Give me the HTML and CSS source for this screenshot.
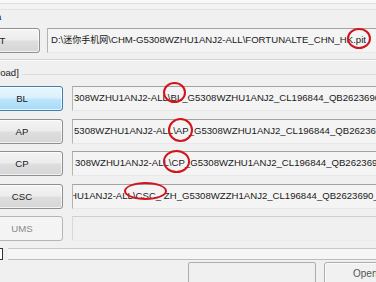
FILE: index.html
```html
<!DOCTYPE html>
<html>
<head>
<meta charset="utf-8">
<link rel="stylesheet" href="styles.css">
</head>
<body>
<div class="win">
  <div class="topstrip"><div class="band"></div><div class="band2"></div><span class="cut">a</span></div>
  <div class="row pitrow">
    <button class="btn pit">PIT</button>
    <div class="tb">D:\<span class="cjk">迷你手机网</span>\CHM-G5308WZHU1ANJ2-ALL\FORTUNALTE_CHN_HK.pit</div>
  </div>
  <div class="sep"></div>
  <div class="grp"><span class="grplabel">load]</span><span class="grpline"></span></div>
  <div class="rows">
    <div class="row"><button class="btn act">BL</button><div class="tb">308WZHU1ANJ2-ALL\BL_G5308WZHU1ANJ2_CL196844_QB2623690</div></div>
    <div class="row"><button class="btn">AP</button><div class="tb">5308WZHU1ANJ2-ALL\AP_G5308WZHU1ANJ2_CL196844_QB2623690</div></div>
    <div class="row"><button class="btn">CP</button><div class="tb tb-cp">308WZHU1ANJ2-ALL\CP_G5308WZHU1ANJ2_CL196844_QB2623690</div></div>
    <div class="row"><button class="btn">CSC</button><div class="tb tb-csc">HU1ANJ2-ALL\CSC_ ZH_G5308WZZH1ANJ2_CL196844_QB2623690_</div></div>
    <div class="row"><button class="btn dis">UMS</button><div class="tb tbdis"></div></div>
  </div>
  <div class="prog"><span class="chk"></span><span class="bar"></span></div>
  <div class="bottom"><div class="box"></div><button class="btn open">Open</button></div>
  <div class="ring r0"></div>
  <div class="ring r1"></div>
  <div class="ring r2"></div>
  <div class="ring r3"></div>
  <div class="ring r4"></div>
</div>
</body>
</html>
```
FILE: styles.css
```css
html, body { margin: 0; padding: 0; }
body { background: #f0f0f0; overflow: hidden; }
.win {
  position: relative;
  width: 376px;
  height: 282px;
  overflow: hidden;
  font-family: "Liberation Sans", "Noto Sans CJK SC", sans-serif;
  font-size: 9.6px;
  color: #1a1a1a;
  background: #f0f0f0;
}
.topstrip { height: 20px; position: relative; }
.band { height: 3px; background: #f9f9f9; border-bottom: 1px solid #dedede; }
.band2 { height: 5px; border-bottom: 1px solid #e2e2e2; background: #f3f3f3; }
.cut { display: block; margin-left: -4px; line-height: 9px; margin-top: 2px; }
.row { display: flex; align-items: stretch; height: 25px; gap: 9px; }
.pitrow { margin-top: 8px; gap: 7px; }
.btn {
  flex: none;
  width: 82px;
  margin-left: -19px;
  height: 25px;
  box-sizing: border-box;
  border: 1px solid #8e8f8f;
  border-radius: 3px;
  background: linear-gradient(#f4f4f4 0%, #ececec 48%, #dedede 52%, #d6d6d6 100%);
  font-family: inherit;
  font-size: 9.6px;
  color: #1a1a1a;
  padding: 0;
  box-shadow: inset 0 0 0 1px rgba(255,255,255,0.7);
}
.btn.pit { width: 84px; margin-left: -44px; }
.btn.act {
  border-color: #3c7fb1;
  background: linear-gradient(#eaf6fd 0%, #d9f0fc 48%, #bee6fd 52%, #a7d9f5 100%);
}
.btn.dis {
  border-color: #b5b5b5;
  background: #f4f4f4;
  color: #8a8a8a;
  box-shadow: none;
}
.tb {
  flex: none;
  width: 400px;
  box-sizing: border-box;
  border: 1px solid;
  border-color: #a3a3a3 #dcdcdc #e8e8e8 #b4b4b4;
  background: #f4f4f4;
  padding: 0 0 0 1px;
  display: flex;
  align-items: center;
  white-space: nowrap;
  overflow: hidden;
  padding-bottom: 2px;
}
.pitrow .tb { padding-left: 3px; }
.tb-cp { padding-left: 2px; }
.tb-csc { padding-left: 0; text-indent: -3px; }
.tbdis { border-color: #cfcfcf #e4e4e4 #ececec #d8d8d8; background: #f0f0f0; }
.cjk { font-family: "Noto Sans CJK SC", sans-serif; font-size: 9px; }
.sep { margin-top: 6px; height: 1px; background: #d4d4d4; border-bottom: 1px solid #fafafa; }
.grp { display: flex; align-items: center; margin-top: 6px; height: 11px; gap: 3px; }
.grplabel { margin-left: -2px; line-height: 11px; }
.grpline { flex: 1; height: 1px; background: #dcdcdc; margin-top: 4px; }
.rows { margin-top: 8px; display: flex; flex-direction: column; gap: 7.5px; }
.prog { display: flex; align-items: stretch; margin-top: 7px; height: 12px; gap: 5px; }
.chk { width: 12px; margin-left: -9px; box-sizing: border-box; border: 1px solid #333; background: #fff; }
.bar { flex: 1; box-sizing: border-box; border-top: 1px solid #c9c9c9; border-bottom: 1px solid #bdbdbd; background: #f6f6f6; }
.bottom { display: flex; margin-top: 2px; height: 30px; gap: 8px; padding-left: 188px; }
.box { flex: none; width: 128px; box-sizing: border-box; border: 1px solid #adadad; border-radius: 2px; background: #f0f0f0; }
.btn.open { flex: none; width: 80px; margin-left: 0; height: 30px; border-color: #adadad; background: #f1f1f1; color: #555; text-align: left; padding-left: 28px; padding-bottom: 8px; font-size: 10px; }
.ring {
  position: absolute;
  box-sizing: border-box;
  border: 2.5px solid #d0151b;
  border-radius: 50%;
}
.r0 { left: 347px; top: 28px; width: 24px; height: 21px; }
.r1 { left: 163px; top: 82px; width: 23px; height: 21px; }
.r2 { left: 168px; top: 118px; width: 25px; height: 24px; }
.r3 { left: 163px; top: 150px; width: 27px; height: 23px; }
.r4 { left: 124px; top: 182px; width: 43px; height: 18px; }
```
